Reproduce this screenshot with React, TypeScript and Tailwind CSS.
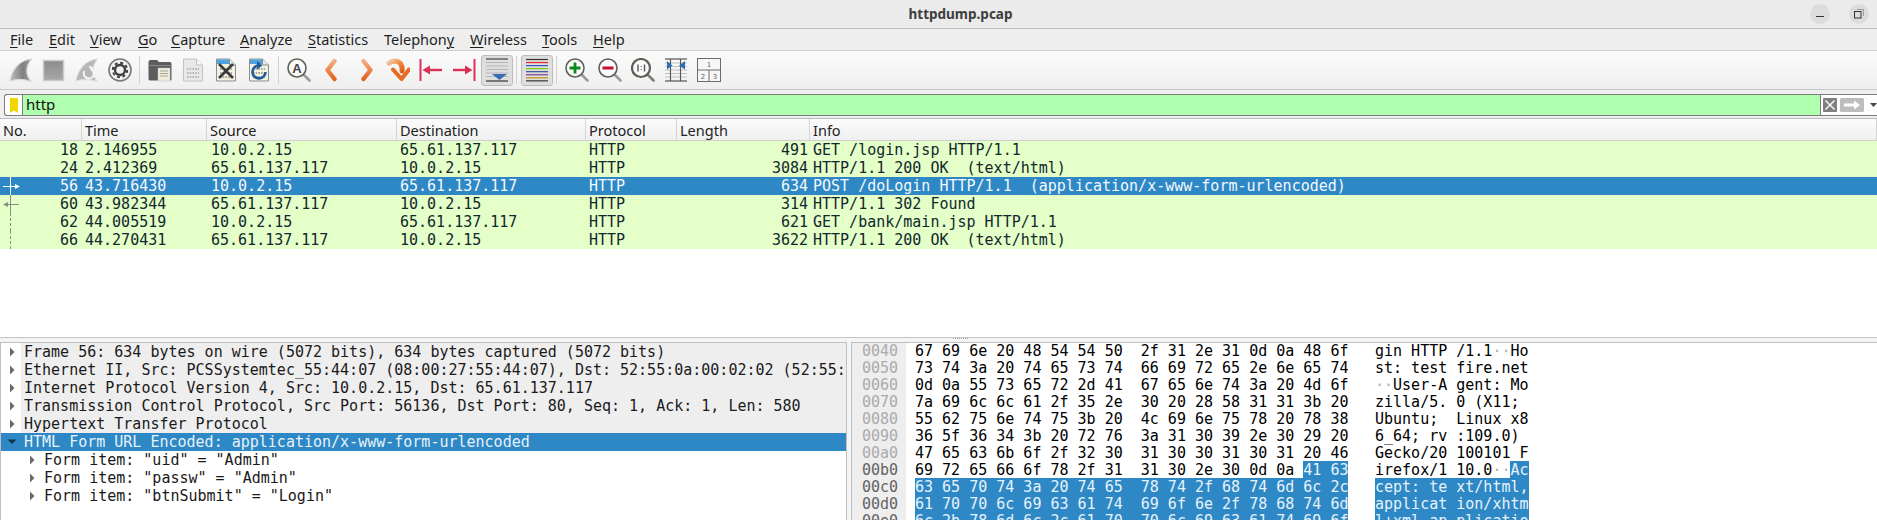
import React from "react";

const menus = [
  { pre: "", u: "F", post: "ile", w: "w-[39px]" },
  { pre: "", u: "E", post: "dit", w: "w-[41px]" },
  { pre: "", u: "V", post: "iew", w: "w-[48px]" },
  { pre: "", u: "G", post: "o", w: "w-[33px]" },
  { pre: "", u: "C", post: "apture", w: "w-[69px]" },
  { pre: "", u: "A", post: "nalyze", w: "w-[68px]" },
  { pre: "", u: "S", post: "tatistics", w: "w-[76px]" },
  { pre: "Telephon", u: "y", post: "", w: "w-[86px]" },
  { pre: "", u: "W", post: "ireless", w: "w-[72px]" },
  { pre: "", u: "T", post: "ools", w: "w-[51px]" },
  { pre: "", u: "H", post: "elp", w: "w-[50px]" },
];

const packets = [
  ["18", "2.146955", "10.0.2.15", "65.61.137.117", "HTTP", "491", "GET /login.jsp HTTP/1.1"],
  ["24", "2.412369", "65.61.137.117", "10.0.2.15", "HTTP", "3084", "HTTP/1.1 200 OK  (text/html)"],
  ["56", "43.716430", "10.0.2.15", "65.61.137.117", "HTTP", "634", "POST /doLogin HTTP/1.1  (application/x-www-form-urlencoded)"],
  ["60", "43.982344", "65.61.137.117", "10.0.2.15", "HTTP", "314", "HTTP/1.1 302 Found"],
  ["62", "44.005519", "10.0.2.15", "65.61.137.117", "HTTP", "621", "GET /bank/main.jsp HTTP/1.1"],
  ["66", "44.270431", "65.61.137.117", "10.0.2.15", "HTTP", "3622", "HTTP/1.1 200 OK  (text/html)"],
];

const tree = [
  "Frame 56: 634 bytes on wire (5072 bits), 634 bytes captured (5072 bits)",
  "Ethernet II, Src: PCSSystemtec_55:44:07 (08:00:27:55:44:07), Dst: 52:55:0a:00:02:02 (52:55:0a:00:02:02)",
  "Internet Protocol Version 4, Src: 10.0.2.15, Dst: 65.61.137.117",
  "Transmission Control Protocol, Src Port: 56136, Dst Port: 80, Seq: 1, Ack: 1, Len: 580",
  "Hypertext Transfer Protocol",
];
const formItems = ['Form item: "uid" = "Admin"', 'Form item: "passw" = "Admin"', 'Form item: "btnSubmit" = "Login"'];

const hex = [
  { a: "0040", n: "67 69 6e 20 48 54 54 50  2f 31 2e 31 0d 0a 48 6f", s: "", t: "gin HTTP /1.1··Ho", u: "" },
  { a: "0050", n: "73 74 3a 20 74 65 73 74  66 69 72 65 2e 6e 65 74", s: "", t: "st: test fire.net", u: "" },
  { a: "0060", n: "0d 0a 55 73 65 72 2d 41  67 65 6e 74 3a 20 4d 6f", s: "", t: "··User-A gent: Mo", u: "" },
  { a: "0070", n: "7a 69 6c 6c 61 2f 35 2e  30 20 28 58 31 31 3b 20", s: "", t: "zilla/5. 0 (X11; ", u: "" },
  { a: "0080", n: "55 62 75 6e 74 75 3b 20  4c 69 6e 75 78 20 78 38", s: "", t: "Ubuntu;  Linux x8", u: "" },
  { a: "0090", n: "36 5f 36 34 3b 20 72 76  3a 31 30 39 2e 30 29 20", s: "", t: "6_64; rv :109.0) ", u: "" },
  { a: "00a0", n: "47 65 63 6b 6f 2f 32 30  31 30 30 31 30 31 20 46", s: "", t: "Gecko/20 100101 F", u: "" },
  { a: "00b0", n: "69 72 65 66 6f 78 2f 31  31 30 2e 30 0d 0a ", s: "41 63", t: "irefox/1 10.0··", u: "Ac" },
  { a: "00c0", n: "", s: "63 65 70 74 3a 20 74 65  78 74 2f 68 74 6d 6c 2c", t: "", u: "cept: te xt/html," },
  { a: "00d0", n: "", s: "61 70 70 6c 69 63 61 74  69 6f 6e 2f 78 68 74 6d", t: "", u: "applicat ion/xhtm" },
  { a: "00e0", n: "", s: "6c 2b 78 6d 6c 2c 61 70  70 6c 69 63 61 74 69 6f", t: "", u: "l+xml,ap plicatio" },
];

function Ascii({ text }: { text: string }) {
  return (
    <>
      {text.split(/(·+)/).map((p, i) =>
        p.startsWith("·") ? (
          <span key={i} className="text-[#b0b0b0]">{p}</span>
        ) : (
          <span key={i}>{p}</span>
        )
      )}
    </>
  );
}

function Svg({ children }: { children: React.ReactNode }) {
  return (
    <svg width="24" height="24" viewBox="0 0 24 24" fill="none">
      {children}
    </svg>
  );
}

const Btn = ({ children, on }: { children: React.ReactNode; on?: boolean }) => (
  <div className="w-[33px] h-[38px] flex items-center justify-center">
    {on ? (
      <div className="w-[32px] h-[31px] flex items-center justify-center rounded-[3px] border border-[#bcbcbc] bg-[#dedede]">
        {children}
      </div>
    ) : (
      children
    )}
  </div>
);
const Sep = () => (
  <div className="w-[7px] h-[38px] flex items-center justify-center">
    <div className="w-px h-[28px] bg-[#d2d2d2]" />
  </div>
);

const fin = "M1 23 C3 11 11 2 22.5 1 C17 8 16 16 22 23.5 C15 21 7 21 1 23Z";
const FinIcon = () => (
  <Svg>
    <defs>
      <linearGradient id="fg1" x1="0" y1="0" x2="1" y2="0">
        <stop offset="0" stopColor="#bdbdbd" />
        <stop offset="0.6" stopColor="#808080" />
        <stop offset="1" stopColor="#a0a0a0" />
      </linearGradient>
    </defs>
    <path d={fin} fill="url(#fg1)" stroke="#d8d8d8" strokeWidth="1.2" />
  </Svg>
);
const StopIcon = () => (
  <Svg>
    <defs>
      <linearGradient id="sg1" x1="0" y1="0" x2="0" y2="1">
        <stop offset="0" stopColor="#8c8c8c" />
        <stop offset="1" stopColor="#a8a8a8" />
      </linearGradient>
    </defs>
    <rect x="1.5" y="2.5" width="20" height="20" fill="url(#sg1)" stroke="#cbcbcb" strokeWidth="1.5" />
  </Svg>
);
const RestartIcon = () => (
  <Svg>
    <path d={fin} fill="#b6b6b6" stroke="#dcdcdc" strokeWidth="1.2" />
    <path d="M9.5 13 A5 5 0 1 0 17 11.5" stroke="#f6f6f6" strokeWidth="2" />
    <path d="M13.5 7.5 L18 9 L16.5 13.5Z" fill="#f6f6f6" />
  </Svg>
);
const GearIcon = () => (
  <Svg>
    <circle cx="12" cy="12" r="11" fill="#f2f2f2" stroke="#777" strokeWidth="1.6" />
    <circle cx="12" cy="12" r="7.2" stroke="#3f3f3f" strokeWidth="2" strokeDasharray="3 2.65" />
    <circle cx="12" cy="12" r="5" stroke="#3f3f3f" strokeWidth="2.4" />
  </Svg>
);
const FolderIcon = () => (
  <Svg>
    <path d="M0.5 4 Q0.5 2 2.5 2 H9 L11 4 H22 Q23.5 4 23.5 6 V21 Q23.5 22.5 22 22.5 H2.5 Q0.5 22.5 0.5 21Z" fill="#5c5c5c" />
    <rect x="0.5" y="7" width="23" height="1" fill="#8a8a8a" />
    <rect x="10" y="10" width="12" height="13" fill="#efecdf" stroke="#bbb" strokeWidth="0.5" />
    <path d="M12 13 H20 M12 15.5 H20 M12 18 H20" stroke="#a8a690" strokeWidth="1" />
  </Svg>
);
const Bits = ({ c }: { c: string }) => (
  <g stroke={c} strokeWidth="1.6" strokeDasharray="1.6 1.1">
    <path d="M6 11 H18 M6 15 H18 M6 19 H18" />
  </g>
);
const FileIcon = () => (
  <Svg>
    <path d="M2.5 1 H15.5 L21.5 7 V23 H2.5Z" fill="#e8e8e8" stroke="#c2c2c2" />
    <path d="M15.5 1 V7 H21.5" fill="#f6f6f6" stroke="#c2c2c2" />
    <Bits c="#a8a8a8" />
  </Svg>
);
const CloseIcon = () => (
  <Svg>
    <path d="M2.5 1 H15.5 L21.5 7 V23 H2.5Z" fill="#f3f1df" stroke="#8d8d8d" />
    <path d="M3 1.5 H15 V6 H3Z" fill="#4ea3de" />
    <path d="M15.5 1 V7 H21.5" fill="#dfeaf2" stroke="#8d8d8d" />
    <Bits c="#8f8f7a" />
    <path d="M5 6 L19 20 M19 6 L5 20" stroke="#3a3a3a" strokeWidth="2.6" />
  </Svg>
);
const ReloadIcon = () => (
  <Svg>
    <path d="M2.5 1 H15.5 L21.5 7 V23 H2.5Z" fill="#f3f1df" stroke="#8d8d8d" />
    <path d="M3 1.5 H15 V6 H3Z" fill="#4ea3de" />
    <path d="M15.5 1 V7 H21.5" fill="#dfeaf2" stroke="#8d8d8d" />
    <Bits c="#8f8f7a" />
    <path d="M11 7.5 A6.5 6.5 0 1 0 18.5 14" stroke="#1f5c9c" strokeWidth="2.6" />
    <path d="M10 3 L15.5 7.5 L10 11.5Z" fill="#1f5c9c" />
  </Svg>
);
const Glass = ({ children }: { children: React.ReactNode }) => (
  <Svg>
    <path d="M16.5 16.5 L22.5 22.5" stroke="#9a9a9a" strokeWidth="2.6" strokeLinecap="round" />
    <circle cx="10" cy="10" r="9" fill="#fbfbfb" stroke="#5e5e52" strokeWidth="1.6" />
    {children}
  </Svg>
);
const FindIcon = () => (
  <Glass>
    <text x="10" y="14.5" textAnchor="middle" fontSize="13" fontWeight="700" fill="#444" fontFamily="'Liberation Sans', sans-serif">A</text>
  </Glass>
);
const Chevron = ({ flip }: { flip?: boolean }) => (
  <Svg>
    <defs>
      <linearGradient id={flip ? "cg2" : "cg1"} gradientUnits="userSpaceOnUse" x1="0" y1="2" x2="0" y2="22">
        <stop offset="0" stopColor="#f4b084" />
        <stop offset="1" stopColor="#e2601e" />
      </linearGradient>
    </defs>
    <path
      d={flip ? "M10.5 3 L17.5 12 L10.5 21" : "M14.5 3 L7.5 12 L14.5 21"}
      stroke={`url(#${flip ? "cg2" : "cg1"})`}
      strokeWidth="4.4"
      strokeLinejoin="round"
      strokeLinecap="round"
    />
  </Svg>
);
const JumpIcon = () => (
  <Svg>
    <defs>
      <linearGradient id="jg" x1="0" y1="0" x2="1" y2="1">
        <stop offset="0" stopColor="#f0c9a8" />
        <stop offset="0.5" stopColor="#ee8b3f" />
        <stop offset="1" stopColor="#e2601e" />
      </linearGradient>
    </defs>
    <path d="M3 5 C9 1 17 3 16 13" stroke="url(#jg)" strokeWidth="5" strokeLinecap="round" />
    <path d="M7 11.5 L15.5 21 L23 11.5" stroke="#e8691f" strokeWidth="4" strokeLinecap="round" strokeLinejoin="round" />
  </Svg>
);
const FirstIcon = () => (
  <Svg>
    <path d="M1.5 1 V23" stroke="#dc2f57" strokeWidth="2" />
    <path d="M8 12 H23" stroke="#dc2f57" strokeWidth="2.4" />
    <path d="M3.5 12 L11 7.5 V16.5Z" fill="#dc2f57" />
  </Svg>
);
const LastIcon = () => (
  <Svg>
    <path d="M22.5 1 V23" stroke="#dc2f57" strokeWidth="2" />
    <path d="M1 12 H16" stroke="#dc2f57" strokeWidth="2.4" />
    <path d="M20.5 12 L13 7.5 V16.5Z" fill="#dc2f57" />
  </Svg>
);
const AutoIcon = () => (
  <Svg>
    <path d="M1 1 H23" stroke="#444" strokeWidth="1.2" />
    <path d="M1 4.5 H23 M1 8 H23 M1 11.5 H23 M1 15 H23 M1 18.5 H23" stroke="#b8b8b8" strokeWidth="1" />
    <path d="M1 23 H23" stroke="#333" strokeWidth="1.2" />
    <path d="M7 16 H22 L14.5 22Z" fill="#3a6cb0" />
  </Svg>
);
const ColorIcon = () => (
  <Svg>
    {["#333", "#e22", "#3355cc", "#77cc00", "#3a4a9a", "#7b3f8c", "#c09010", "#333"].map((c, i) => (
      <path key={i} d={`M1 ${1.5 + i * 3.05} H23`} stroke={c} strokeWidth="1.2" />
    ))}
  </Svg>
);
const ZoomInIcon = () => (
  <Glass>
    <path d="M10 4.5 V15.5 M4.5 10 H15.5" stroke="#0a8a1e" strokeWidth="2.8" />
  </Glass>
);
const ZoomOutIcon = () => (
  <Glass>
    <path d="M4.5 10 H15.5" stroke="#c8102e" strokeWidth="3" />
  </Glass>
);
const ZoomOneIcon = () => (
  <Svg>
    <path d="M16.5 16.5 L22.5 22.5" stroke="#7d7d7d" strokeWidth="2.6" strokeLinecap="round" />
    <circle cx="10" cy="10" r="9" fill="#fbfbfb" stroke="#5e5e52" strokeWidth="2.2" />
    <path d="M7 6.5 V13.5 M13.5 6.5 V13.5 M10.3 8 V8.8 M10.3 11 V11.8" stroke="#555" strokeWidth="1.4" />
  </Svg>
);
const ResizeIcon = () => (
  <Svg>
    <path d="M1 1 H23 M1 23 H23" stroke="#333" strokeWidth="1.1" />
    <path d="M1 5 H23 M1 8.5 H23 M1 12 H23 M1 15.5 H23 M1 19 H23" stroke="#c0c0c0" strokeWidth="1" />
    <path d="M6.5 1 V23 M16.5 1 V23" stroke="#555" strokeWidth="1.1" />
    <path d="M3 3.5 L8.5 8 L3 12Z M21 3.5 L15 8 L21 12Z" fill="#2f6cb5" transform="translate(0,-0.5)" />
  </Svg>
);
const LayoutIcon = () => (
  <Svg>
    <rect x="0.5" y="0.5" width="23" height="23" stroke="#6b6b6b" fill="#f7f7f7" />
    <path d="M0.5 12 H23.5 M12 12 V23.5" stroke="#6b6b6b" />
    <text x="12" y="9" textAnchor="middle" fontSize="7" fill="#666" fontFamily="'DejaVu Sans', sans-serif">1</text>
    <text x="6" y="20.5" textAnchor="middle" fontSize="7" fill="#666" fontFamily="'DejaVu Sans', sans-serif">2</text>
    <text x="18" y="20.5" textAnchor="middle" fontSize="7" fill="#666" fontFamily="'DejaVu Sans', sans-serif">3</text>
  </Svg>
);

function Marks({ i }: { i: number }) {
  if (i < 2) return null;
  const gray = "#8a8f8a";
  return (
    <svg width="24" height="18" viewBox="0 0 24 18" className="absolute left-0 top-0">
      {i === 2 && (
        <g>
          <path d="M10.5 0 V18 M3 9.5 H16" stroke="#fff" strokeWidth="1" />
          <path d="M15 7 L20 9.5 L15 12Z" fill="#fff" />
        </g>
      )}
      {i === 3 && (
        <g>
          <path d="M10.5 0 V18 M7 9.5 H19" stroke={gray} strokeWidth="1" />
          <path d="M8 7 L3 9.5 L8 12Z" fill={gray} />
        </g>
      )}
      {i > 3 && <path d="M10.5 0 V18" stroke={gray} strokeWidth="1" strokeDasharray="3 2" />}
    </svg>
  );
}

const Arrow = ({ down }: { down?: boolean }) =>
  down ? (
    <svg width="12" height="8" viewBox="0 0 12 8"><path d="M1.5 1.5 H10.5 L6 6Z" fill="#12364f" /></svg>
  ) : (
    <svg width="8" height="12" viewBox="0 0 8 12"><path d="M2 1.5 L6.5 6 L2 10.5Z" fill="#6a6a6a" /></svg>
  );

const mono = "font-['DejaVu_Sans_Mono',monospace] text-[15px] whitespace-pre";

export default function App() {
  return (
    <div className="w-[1877px] h-[520px] overflow-hidden flex flex-col bg-[#efefef] font-['Noto_Sans',sans-serif] text-[#1c1c1c]">
      <div className="h-[29px] shrink-0 flex items-center bg-[#ebebeb] border-b border-[#bdbdbd]">
        <div className="flex-1 pl-[111px] text-center text-[13.5px] font-bold text-[#3d3d3d]">httpdump.pcap</div>
        <div className="flex items-center gap-[19px] pr-[8px]">
          <div className="w-[20px] h-[20px] rounded-full bg-[#dcdcdc] flex items-center justify-center">
            <div className="w-[8px] h-[1px] mt-[4px] bg-[#333]" />
          </div>
          <div className="w-[20px] h-[20px] rounded-full bg-[#dcdcdc] flex items-center justify-center">
            <svg width="10" height="10" viewBox="0 0 10 10">
              <rect x="0.5" y="2.5" width="6.5" height="6.5" fill="none" stroke="#333" />
              <path d="M3 0.5 H9.5 V7" fill="none" stroke="#999" />
            </svg>
          </div>
        </div>
      </div>

      <div className="h-[22px] shrink-0 flex items-center pl-[10px] bg-[#eeeeee] border-b border-[#cfcfcf] text-[14.5px] text-[#1e1e1e]">
        {menus.map((m) => (
          <div key={m.u + m.post} className={m.w + " shrink-0"}>
            {m.pre}
            <span className="underline decoration-1 underline-offset-2">{m.u}</span>
            {m.post}
          </div>
        ))}
      </div>

      <div className="h-[39px] shrink-0 flex items-center pl-[4px] bg-gradient-to-b from-[#fbfbfb] to-[#efefef] border-b border-[#c8c8c8]">
        <Btn><FinIcon /></Btn>
        <Btn><StopIcon /></Btn>
        <Btn><RestartIcon /></Btn>
        <Btn><GearIcon /></Btn>
        <Sep />
        <Btn><FolderIcon /></Btn>
        <Btn><FileIcon /></Btn>
        <Btn><CloseIcon /></Btn>
        <Btn><ReloadIcon /></Btn>
        <Sep />
        <Btn><FindIcon /></Btn>
        <Btn><Chevron /></Btn>
        <Btn><Chevron flip /></Btn>
        <Btn><JumpIcon /></Btn>
        <Btn><FirstIcon /></Btn>
        <Btn><LastIcon /></Btn>
        <Btn on><AutoIcon /></Btn>
        <Sep />
        <Btn on><ColorIcon /></Btn>
        <Sep />
        <Btn><ZoomInIcon /></Btn>
        <Btn><ZoomOutIcon /></Btn>
        <Btn><ZoomOneIcon /></Btn>
        <Btn><ResizeIcon /></Btn>
        <Btn><LayoutIcon /></Btn>
      </div>

      <div className="h-[28px] shrink-0 pt-[4px] pl-[4px] bg-[#efefef]">
        <div className="h-[22px] flex items-stretch border-y border-l border-[#7c7c7c] rounded-l-[3px] bg-white">
          <div className="w-[18px] shrink-0 flex items-center justify-center border-r border-[#7c7c7c]">
            <svg width="8" height="15" viewBox="0 0 8 15"><path d="M0 0 H8 V15 L4 12.5 L0 15Z" fill="#f2d600" /></svg>
          </div>
          <div className="w-[1798px] shrink-0 bg-[#afffaf] border-r border-[#7c7c7c] pl-[3px] leading-[19px] text-[15px] font-['Noto_Sans',sans-serif] text-[#111]">http</div>
          <div className="flex items-center pl-[2px] gap-[3px]">
            <svg width="14" height="14" viewBox="0 0 14 14">
              <rect width="14" height="14" rx="1" fill="#808080" />
              <path d="M2.5 2.5 L11.5 11.5 M11.5 2.5 L2.5 11.5" stroke="#fff" strokeWidth="1.4" />
            </svg>
            <svg width="24" height="14" viewBox="0 0 24 14">
              <rect width="24" height="14" rx="1.5" fill="#bdbdbd" />
              <path d="M4 5.5 H14 V2.5 L20 7 L14 11.5 V8.5 H4Z" fill="#fff" />
            </svg>
            <svg width="8" height="6" viewBox="0 0 8 6" className="ml-[3px]"><path d="M0 1 H7 L3.5 5Z" fill="#444" /></svg>
          </div>
        </div>
      </div>

      <div className="h-[220px] shrink-0 flex flex-col bg-white border-t border-[#bbbbbb] border-b border-b-[#c4c4c4]">
        <div className="h-[22px] shrink-0 grid grid-cols-[82px_125px_190px_189px_91px_133px_1fr] bg-gradient-to-b from-[#fbfbfb] to-[#f0f0f0] border-b border-[#cfcfcf] text-[14.5px] leading-[22px] text-[#222]">
          {["No.", "Time", "Source", "Destination", "Protocol", "Length", "Info"].map((h) => (
            <div key={h} className="pl-[3px] border-r border-[#d4d4d4]">{h}</div>
          ))}
        </div>
        {packets.map((p, i) => {
          const sel = i === 2;
          return (
            <div
              key={p[0]}
              className={
                "relative h-[18px] shrink-0 grid grid-cols-[82px_125px_190px_189px_91px_133px_1fr] leading-[18px] " +
                mono +
                (sel ? " bg-[#2e88c5] text-[#f2f8fc]" : " bg-[#e4ffc7] text-[#12272e]")
              }
            >
              <Marks i={i} />
              <div className="text-right pr-[4px]">{p[0]}</div>
              <div className="pl-[3px]">{p[1]}</div>
              <div className="pl-[4px]">{p[2]}</div>
              <div className="pl-[3px]">{p[3]}</div>
              <div className="pl-[3px]">{p[4]}</div>
              <div className="text-right pr-[2px]">{p[5]}</div>
              <div className="pl-[3px]">{p[6]}</div>
            </div>
          );
        })}
      </div>

      <div className="flex-1 min-h-0 flex flex-col bg-[#f4f4f4]">
        <div className="h-[4px] shrink-0 pl-[953px]">
          <div className="w-[15px] border-t border-dotted border-[#a8a8a8]" />
        </div>
        <div className="flex-1 min-h-0 flex">
          <div className="w-[847px] shrink-0 bg-white border-x border-t border-[#bfbfbf] overflow-hidden">
            {tree.map((t) => (
              <div key={t} className={"h-[18px] flex leading-[18px] text-[#1a1a1a] " + mono}>
                <div className="w-[20px] shrink-0 flex items-center pl-[7px]"><Arrow /></div>
                <div className="flex-1 min-w-0 pl-[3px] bg-[#eeeeee] overflow-hidden">{t}</div>
              </div>
            ))}
            <div className={"h-[18px] flex leading-[18px] bg-[#2e88c5] text-[#e6f2fa] " + mono}>
              <div className="w-[20px] shrink-0 flex items-center pl-[5px]"><Arrow down /></div>
              <div className="pl-[3px]">HTML Form URL Encoded: application/x-www-form-urlencoded</div>
            </div>
            {formItems.map((t) => (
              <div key={t} className={"h-[18px] flex leading-[18px] text-[#1a1a1a] " + mono}>
                <div className="w-[40px] shrink-0 flex items-center pl-[27px]"><Arrow /></div>
                <div className="pl-[3px]">{t}</div>
              </div>
            ))}
          </div>
          <div className="w-[4px] shrink-0" />
          <div className="flex-1 min-w-0 bg-white border-l border-t border-[#bfbfbf] overflow-hidden">
            {hex.map((r, i) => (
              <div key={r.a} className={"h-[17px] flex leading-[17px] text-black " + mono}>
                <div className={"w-[54px] shrink-0 bg-[#eeeeee] pl-[10px] " + (i < 7 ? "text-[#ababab]" : "text-[#636363]")}>{r.a}</div>
                <div className="w-[9px] shrink-0" />
                <div className="w-[434px] shrink-0">
                  {r.n}
                  {r.s && <span className="bg-[#2e88c5] text-[#e6f2fa]">{r.s}</span>}
                </div>
                <div className="w-[26px] shrink-0" />
                <div>
                  <Ascii text={r.t} />
                  {r.u && <span className="bg-[#2e88c5] text-[#e6f2fa]">{r.u}</span>}
                </div>
              </div>
            ))}
          </div>
        </div>
      </div>
    </div>
  );
}
